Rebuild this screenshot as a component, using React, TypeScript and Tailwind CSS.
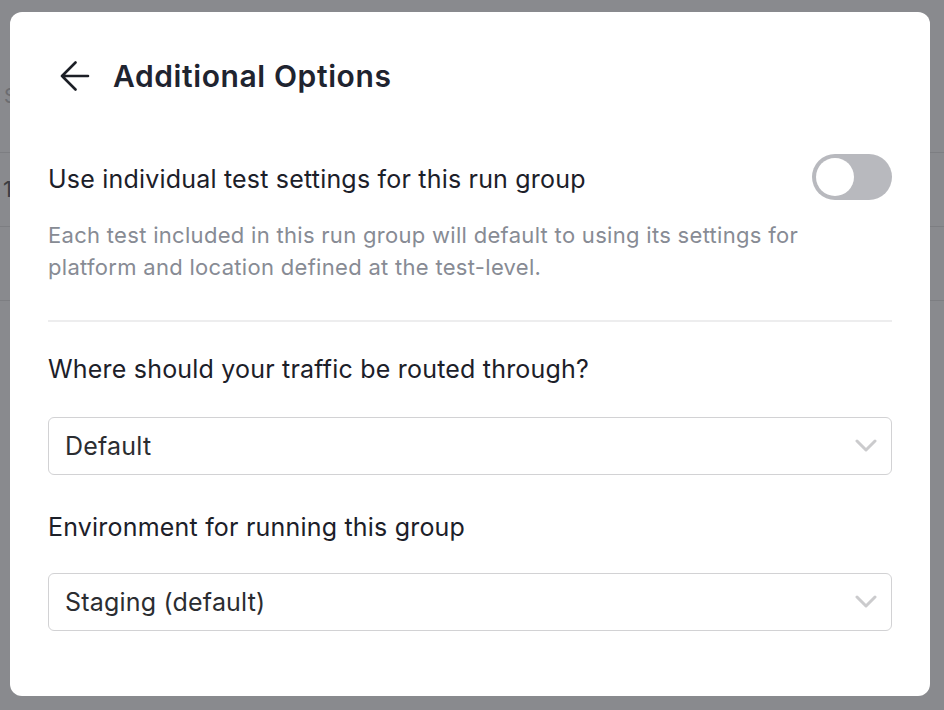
import React from "react";

function BackArrow() {
  return (
    <svg width="30" height="30" viewBox="0 0 30 30" fill="none" className="shrink-0">
      <path
        d="M28 15H2M15.5 1.5L2 15l13.5 13.5"
        stroke="#1c1f26"
        strokeWidth="2.6"
        strokeLinecap="round"
        strokeLinejoin="round"
      />
    </svg>
  );
}

function Chevron() {
  return (
    <svg width="22" height="14" viewBox="0 0 22 14" fill="none" className="shrink-0">
      <path d="M2 2l9 9 9-9" stroke="#cbcbcd" strokeWidth="3" strokeLinecap="round" strokeLinejoin="round" />
    </svg>
  );
}

function SelectBox({ value }: { value: string }) {
  return (
    <div className="flex h-[58px] items-center justify-between rounded-[6px] border-[1.5px] border-[#d2d2d4] bg-white pl-[16px] pr-[14px]">
      <span className="text-[25px] leading-none tracking-[0.2px] text-[#2b2d31]">{value}</span>
      <Chevron />
    </div>
  );
}

function Toggle() {
  return (
    <div className="flex h-[46px] w-[80px] shrink-0 items-center rounded-full bg-[#b8b9be] px-[4px]">
      <div className="h-[38px] w-[38px] rounded-full bg-white" />
    </div>
  );
}

export default function App() {
  return (
    <div
      className="relative h-[710px] w-full overflow-hidden bg-[#898a8e]"
      style={{ fontFamily: "Inter, 'Noto Sans', sans-serif" }}
    >
      {/* page behind the overlay */}
      <div className="flex flex-col">
        <div className="h-[153px] border-b border-[#7d7e82] pl-[4px] pt-[82px] text-[20px] leading-[28px] text-[#6c6d71]">
          S
        </div>
        <div className="flex h-[74px] items-center border-b border-[#7d7e82] pl-[3px] text-[22px] text-[#3c3d41]">
          1
        </div>
        <div className="h-[74px] border-b border-[#7d7e82]" />
      </div>

      {/* modal */}
      <div className="absolute left-[10px] top-[12px] flex h-[684px] w-[920px] flex-col rounded-[12px] bg-white px-[38px] pt-[44px]">
        <div className="flex h-[40px] items-center pl-[12px]">
          <BackArrow />
          <h1 className="ml-[23px] text-[30px] font-semibold leading-[40px] tracking-[0.6px] text-[#1f2430]">
            Additional Options
          </h1>
        </div>

        <div className="mt-[58px] flex items-center justify-between">
          <span className="pt-[4px] text-[25px] leading-[32px] tracking-[0.2px] text-[#1c2029]">
            Use individual test settings for this run group
          </span>
          <Toggle />
        </div>

        <p className="mt-[19px] w-[780px] text-[22px] leading-[32px] tracking-[0.3px] text-[#878b94]">
          Each test included in this run group will default to using its settings for platform and location defined
          at the test-level.
        </p>

        <div className="mt-[37px] h-[2px] bg-[#ededee]" />

        <div className="mt-[31px] text-[25px] leading-[32px] tracking-[0.2px] text-[#1c2029]">
          Where should your traffic be routed through?
        </div>
        <div className="mt-[32px]">
          <SelectBox value="Default" />
        </div>

        <div className="mt-[36px] text-[25px] leading-[32px] tracking-[0.2px] text-[#1c2029]">
          Environment for running this group
        </div>
        <div className="mt-[30px]">
          <SelectBox value="Staging (default)" />
        </div>
      </div>
    </div>
  );
}
